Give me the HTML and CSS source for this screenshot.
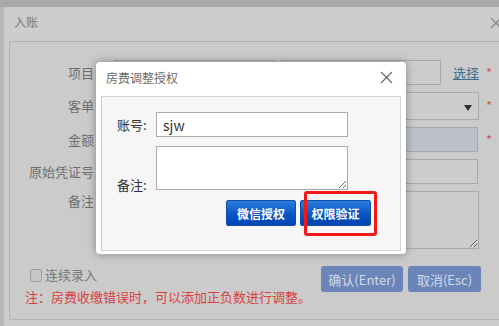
FILE: index.html
```html
<!DOCTYPE html>
<html lang="zh-CN">
<head>
    <meta charset="UTF-8">
    <title>入账</title>
    <link rel="stylesheet" href="styles.css">
</head>
<body>
    <div class="dlg">
        <div class="dlg-head">
            <span class="dlg-title">入账</span>
            <svg class="dlg-close" width="12" height="12" viewBox="0 0 12 12"><path d="M1 1L11 11M11 1L1 11" stroke="#8a8a8a" stroke-width="1.3" fill="none"/></svg>
        </div>
        <div class="dlg-body">
            <div class="panel">
                <div class="form">
                    <label class="lbl">项目</label>
                    <div class="field">
                        <input class="box box-half" type="text">
                        <input class="box box-half" type="text">
                        <a class="pick" href="#">选择</a>
                    </div>
                    <span class="star">*</span>

                    <label class="lbl">客单</label>
                    <div class="field">
                        <div class="box box-select"><span class="arrow"></span></div>
                    </div>
                    <span class="star">*</span>

                    <label class="lbl">金额</label>
                    <div class="field">
                        <input class="box box-full box-amount" type="text">
                    </div>
                    <span class="star">*</span>

                    <label class="lbl">原始凭证号</label>
                    <div class="field">
                        <input class="box box-full" type="text">
                    </div>
                    <span></span>

                    <label class="lbl lbl-top">备注</label>
                    <div class="field">
                        <textarea class="box box-area"></textarea>
                    </div>
                    <span></span>
                </div>

                <div class="foot">
                    <label class="check"><input type="checkbox">连续录入</label>
                    <div class="foot-btns">
                        <button class="btn-dim btn-ok" type="button">确认(Enter)</button>
                        <button class="btn-dim btn-cancel" type="button">取消(Esc)</button>
                    </div>
                </div>
                <p class="note">注：房费收缴错误时，可以添加正负数进行调整。</p>
            </div>
        </div>
    </div>

    <div class="modal">
        <div class="modal-head">
            <span class="modal-title">房费调整授权</span>
            <svg class="modal-close" width="13" height="13" viewBox="0 0 13 13"><path d="M1 1L12 12M12 1L1 12" stroke="#6b6b6b" stroke-width="1.3" fill="none"/></svg>
        </div>
        <div class="modal-panel">
            <div class="m-row">
                <label class="m-lbl">账号:</label>
                <input class="m-input" type="text" value="sjw">
            </div>
            <div class="m-row m-row-area">
                <label class="m-lbl m-lbl-low">备注:</label>
                <textarea class="m-area"></textarea>
            </div>
            <div class="m-btns">
                <button class="btn-blue btn-wx" type="button">微信授权</button>
                <button class="btn-blue btn-auth" type="button">权限验证</button>
            </div>
        </div>
        <div class="mark"></div>
    </div>
</body>
</html>
```

FILE: styles.css
```css
body {
    margin: 0;
    width: 499px;
    height: 326px;
    overflow: hidden;
    font-family: "Noto Sans CJK SC", "Liberation Sans", sans-serif;
    font-size: 13px;
    background: linear-gradient(#a9a9a9 0 7px, #b9b9b9 7px);
    position: relative;
}
.dlg {
    margin: 7px 0 0 4px;
    width: 495px;
    height: 319px;
    background: #cdcdcd;
    border-radius: 4px 0 0 0;
}
.dlg-head {
    height: 34px;
    position: relative;
}
.dlg-title {
    display: block;
    padding-left: 10px;
    line-height: 30px;
    font-size: 12px;
    color: #7b7b7b;
}
.dlg-close {
    position: absolute;
    left: 486px;
    top: 10px;
}
.dlg-body {
    padding-left: 5px;
}
.panel {
    border: 1px solid #b3b3b3;
    border-right: none;
    background: #cbcbcb;
    padding: 18px 0 13px 0;
}
.form {
    display: grid;
    grid-template-columns: 104px 365px 20px;
    row-gap: 7px;
}
.form .star {
    padding-left: 7px;
    color: #d25858;
    font-size: 13px;
    line-height: 22px;
    align-self: center;
}
.lbl {
    box-sizing: border-box;
    padding-right: 20px;
    text-align: right;
    color: #6e6e6e;
    align-self: center;
    line-height: 18px;
}
.lbl-top {
    align-self: start;
    padding-top: 1px;
}
.field {
    display: flex;
    align-items: center;
}
.box {
    box-sizing: border-box;
    height: 25px;
    border: 1px solid #a9a9a9;
    background: #cdcdcd;
    margin: 0;
    padding: 0 4px;
    font: inherit;
}
.box-half {
    width: 161px;
}
.box-half + .box-half {
    margin-left: 5px;
}
.pick {
    margin-left: 12px;
    color: #3b6e8f;
    text-decoration: underline;
    line-height: 18px;
}
.box-select {
    width: 365px;
    height: 28px;
    position: relative;
}
.arrow {
    position: absolute;
    right: 6px;
    top: 12px;
    border-left: 4px solid transparent;
    border-right: 4px solid transparent;
    border-top: 6px solid #2f2f2f;
}
.box-full {
    width: 364px;
}
.box-amount {
    background: #bcc1cb;
}
.box-area {
    width: 365px;
    height: 58px;
    resize: both;
    display: block;
}
.foot {
    display: flex;
    align-items: flex-start;
    width: 471px;
    height: 22px;
    margin-top: 17px;
}
.check {
    display: flex;
    align-items: center;
    margin-left: 20px;
    line-height: 18px;
    color: #777;
}
.check input {
    appearance: none;
    box-sizing: border-box;
    width: 12px;
    height: 13px;
    margin: 0 3px 0 0;
    border: 1px solid #9c9c9c;
    border-radius: 2px;
    background: #c6c6c6;
}
.foot-btns {
    margin-left: auto;
    display: flex;
    gap: 5px;
}
.btn-dim {
    height: 26px;
    border: none;
    border-radius: 3px;
    background: #6b85b9;
    color: #d3d9e7;
    font: inherit;
    padding: 0;
}
.btn-ok {
    width: 82px;
}
.btn-cancel {
    width: 73px;
}
.note {
    margin: 0 0 0 15px;
    line-height: 18px;
    color: #d93f3f;
}

/* authorization popup */
.modal {
    position: absolute;
    left: 96px;
    top: 62px;
    width: 310px;
    height: 192px;
    background: #fff;
    border-radius: 4px;
    box-shadow: 0 0 10px rgba(0, 0, 0, 0.35);
}
.modal-head {
    height: 31px;
    position: relative;
}
.modal-title {
    display: block;
    padding-left: 10px;
    line-height: 31px;
    font-size: 12px;
    color: #6a6a6a;
}
.modal-close {
    position: absolute;
    left: 284px;
    top: 9px;
}
.modal-panel {
    box-sizing: border-box;
    margin: 3px 0 0 5px;
    width: 300px;
    height: 155px;
    background: #f6f6f6;
    border: 1px solid #d2d2d2;
    padding: 15px 0 0 15px;
}
.m-row {
    display: flex;
    align-items: center;
}
.m-row-area {
    align-items: flex-end;
    margin-top: 9px;
}
.m-lbl {
    width: 39px;
    color: #333;
    line-height: 16px;
}
.m-lbl-low {
    margin-bottom: -3px;
}
.m-input {
    box-sizing: border-box;
    width: 192px;
    height: 25px;
    margin: 0;
    border: 1px solid #ababab;
    padding: 0 6px;
    font: inherit;
    font-size: 14px;
    color: #333;
    background: #fff;
}
.m-area {
    box-sizing: border-box;
    width: 192px;
    height: 44px;
    margin: 0;
    border: 1px solid #ababab;
    background: #fff;
    display: block;
}
.m-btns {
    display: flex;
    gap: 4px;
    margin: 10px 0 0 109px;
}
.btn-blue {
    height: 26px;
    border: 1px solid #0f4fa6;
    border-radius: 2px;
    background: linear-gradient(#2c7ddc, #0a55c4 55%, #0045b3);
    color: #fff;
    font: inherit;
    font-size: 12px;
    font-weight: bold;
    padding: 0;
}
.btn-wx {
    width: 70px;
}
.btn-auth {
    width: 71px;
}
.mark {
    position: absolute;
    left: 208px;
    top: 129px;
    width: 73px;
    height: 45px;
    box-sizing: border-box;
    border: 3px solid #f31818;
    border-radius: 3px;
}
```
